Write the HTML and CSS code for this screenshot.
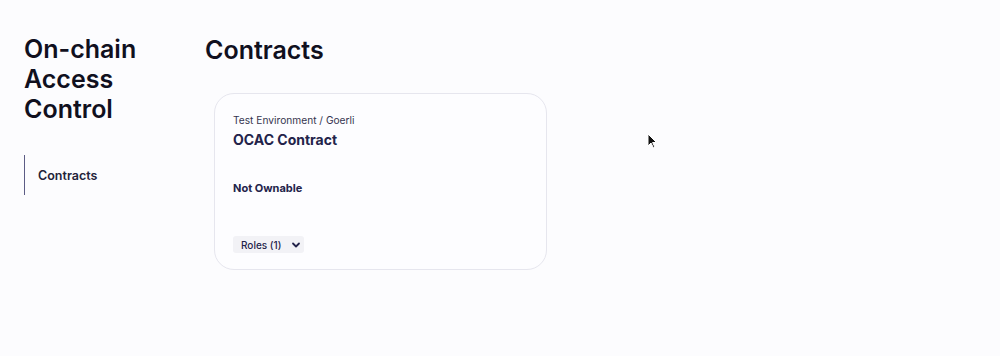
FILE: index.html
```html
<!DOCTYPE html>
<html lang="en">
<head>
    <meta charset="UTF-8">
    <title>On-chain Access Control</title>
    <link rel="stylesheet" href="styles.css">
</head>
<body>
<div class="page">
    <div class="side">
        <h1 class="side_title">On-chain<br>Access<br>Control</h1>
        <div class="side_nav">
            <a class="side_item">Contracts</a>
        </div>
    </div>
    <div class="main">
        <h2 class="main_title">Contracts</h2>
        <div class="card">
            <div class="card_env">Test Environment / Goerli</div>
            <div class="card_name">OCAC Contract</div>
            <div class="card_owner">Not Ownable</div>
            <button class="roles" type="button">Roles (1)
                <svg width="10" height="10" viewBox="0 0 10 10"><path d="M2 3.5 L5 6.5 L8 3.5" fill="none" stroke="#23234a" stroke-width="1.8" stroke-linecap="round" stroke-linejoin="round"/></svg>
            </button>
        </div>
    </div>
</div>
<svg class="cursor" width="12" height="18" viewBox="0 0 12 18"><path d="M1 1 L1 13 L4 10 L6.5 15 L8 14.3 L5.6 9.5 L9.5 9.5 Z" fill="#111" stroke="#fff" stroke-width="1"/></svg>
</body>
</html>
```
FILE: styles.css
```css
html,body{
    margin: 0;
    padding: 0;
}
body{
    background-color: #fcfcfe;
    font-family: Inter, "Noto Sans", sans-serif;
    color: #10101e;
    height: 356px;
    overflow: hidden;
}
.page{
    display: flex;
    padding: 34px 0 0 24px;
}
.side{
    width: 181px;
}
.side_title{
    margin: 0;
    font-size: 25px;
    line-height: 30px;
    font-weight: 600;
}
.side_nav{
    margin-top: 31px;
}
.side_item{
    display: flex;
    align-items: center;
    height: 40px;
    padding-left: 13px;
    border-left: 1.5px solid #5c5c85;
    font-size: 12.5px;
    font-weight: 600;
    color: #23233a;
}
.main{
    display: flex;
    flex-direction: column;
    align-items: flex-start;
}
.main_title{
    margin: 1px 0 0 0;
    font-size: 25px;
    line-height: 30px;
    font-weight: 600;
}
.card{
    box-sizing: border-box;
    width: 333px;
    height: 177px;
    margin: 28px 0 0 9px;
    padding: 19px 18px 0 18px;
    border: 1px solid #e6e6ee;
    border-radius: 20px;
    background-color: #fdfdff;
    color: #23234a;
}
.card_env{
    font-size: 10.2px;
    line-height: 14px;
    color: #35354f;
}
.card_name{
    margin-top: 4px;
    font-size: 14px;
    line-height: 18px;
    font-weight: 700;
}
.card_owner{
    margin-top: 32px;
    font-size: 11px;
    line-height: 14px;
    font-weight: 700;
}
.roles{
    display: flex;
    align-items: center;
    gap: 10px;
    margin-top: 41px;
    height: 17px;
    padding: 0 3px 0 8px;
    border: none;
    border-radius: 3px;
    background-color: #f2f2f6;
    font-family: Inter, "Noto Sans", sans-serif;
    font-size: 10px;
    font-weight: 500;
    color: #23234a;
}
.cursor{
    position: absolute;
    left: 647px;
    top: 133px;
}
```
